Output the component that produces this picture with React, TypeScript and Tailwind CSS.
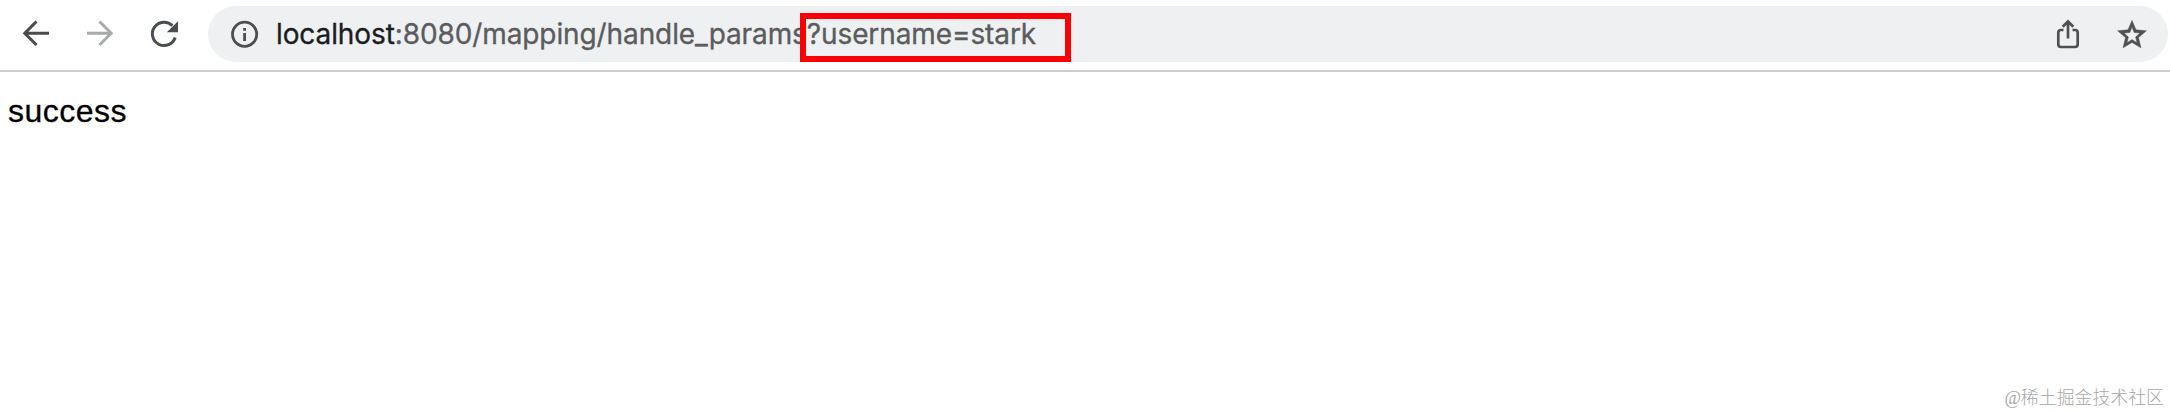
import React from 'react';

const BackIcon: React.FC = () => (
  <svg className="w-[32px] h-[32px]" viewBox="0 0 32 32" fill="none" stroke="#4a4b4d" strokeWidth="3">
    <path d="M29 16.2H5M16.5 4.5L4.8 16.2L16.5 28" />
  </svg>
);

const ForwardIcon: React.FC = () => (
  <svg className="w-[32px] h-[32px]" viewBox="0 0 32 32" fill="none" stroke="#a9aaab" strokeWidth="3">
    <path d="M3 16.2H27M15.5 4.5L27.2 16.2L15.5 28" />
  </svg>
);

const ReloadIcon: React.FC = () => (
  <svg className="w-[32px] h-[32px]" viewBox="0 0 32 32">
    <path d="M27.2 19.5A11.7 11.7 0 1 1 24.4 7.6" fill="none" stroke="#4a4e52" strokeWidth="3" />
    <path d="M30 3.2V14.2H18.8Z" fill="#4a4e52" />
  </svg>
);

const InfoIcon: React.FC = () => (
  <svg className="w-[28px] h-[28px]" viewBox="0 0 28 28">
    <circle cx="13.6" cy="14.3" r="12.1" fill="none" stroke="#4d4e50" strokeWidth="2.8" />
    <path d="M12.2 7.9h2.8v2.9h-2.8zM12.2 12.9h2.8v8h-2.8z" fill="#4d4e50" />
  </svg>
);

const ShareIcon: React.FC = () => (
  <svg className="w-[32px] h-[32px]" viewBox="0 0 32 32" fill="none" stroke="#4f5052" strokeWidth="2.7">
    <path d="M11.5 12H9Q6.3 12 6.3 14.7V26.3Q6.3 29 9 29H23Q25.7 29 25.7 26.3V14.7Q25.7 12 23 12H20.5" />
    <path d="M16 20.6V4M10.7 8.8L16 3.5L21.3 8.8" />
  </svg>
);

const StarIcon: React.FC = () => (
  <svg className="w-[32px] h-[32px]" viewBox="0 0 24 24" fill="#4f5052" stroke="#4f5052" strokeWidth="0.35">
    <path d="M22.8 9.6l-7.8-.7L12 1.8 9 8.9l-7.8.7 5.9 5.1-1.8 7.7L12 18.3l6.7 4.1-1.8-7.7zM12 16.2l-3.7 2.3 1-4.3-3.3-2.9 4.4-.4L12 6.8l1.6 4.1 4.4.4-3.3 2.9 1 4.3z" />
  </svg>
);

const App: React.FC = () => {
  return (
    <div className="flex flex-col h-[414px] bg-white overflow-hidden">
      {/* Toolbar */}
      <header className="flex items-start h-[72px] border-b-2 border-[#cdcdcd] pt-[6px] pl-5 pr-[2px] shrink-0">
        <nav className="flex items-center gap-8 h-[56px] w-[188px] shrink-0">
          <button className="-mt-[2px]"><BackIcon /></button>
          <button className="-mt-[2px]"><ForwardIcon /></button>
          <button><ReloadIcon /></button>
        </nav>

        {/* Address bar */}
        <div className="relative flex flex-1 items-center h-[56px] rounded-full bg-[#eff0f2] pl-[23px] pr-5">
          <InfoIcon />
          <div className="flex ml-[17px] font-['Inter',sans-serif] text-[28px] leading-[56px] tracking-[-0.1px] whitespace-nowrap text-[#5b5c5e] [-webkit-text-stroke:0.35px]">
            <span className="text-[#1c1d1f]">localhost</span>
            <span>:8080/mapping/handle_params</span>
            <span>?username=stark</span>
          </div>
          <div className="flex items-center gap-8 ml-auto">
            <ShareIcon />
            <StarIcon />
          </div>
          <div className="absolute left-[592px] top-[7px] w-[271px] h-[49px] border-[6px] border-[#fb0000]" />
        </div>
      </header>

      {/* Page content */}
      <main className="flex-1 pt-[21px] pl-2 font-['Liberation_Sans',sans-serif] text-[32px] leading-[37px] tracking-[0.5px] text-black [-webkit-text-stroke:0.3px]">
        success
      </main>

      <footer className="flex justify-end pr-[6px] pb-[3px] font-['Liberation_Serif','Noto_Sans_CJK_SC',serif] font-light text-[17.9px] leading-[26px] text-[#a8a8a8]">
        @稀土掘金技术社区
      </footer>
    </div>
  );
};

export default App;
